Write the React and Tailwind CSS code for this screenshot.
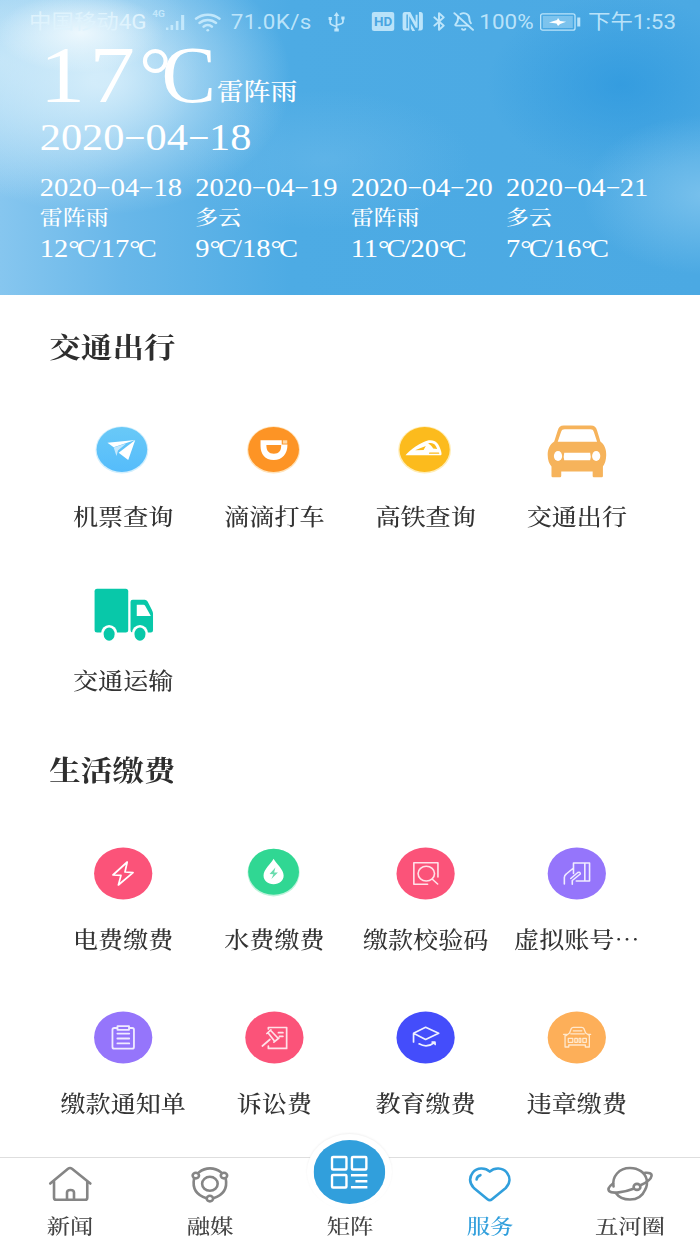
import React from 'react';
import { Wifi, Bluetooth, BellOff } from 'lucide-react';

const forecast = [
  { date: '2020-04-18', weather: '雷阵雨', low: '12', high: '17' },
  { date: '2020-04-19', weather: '多云', low: '9', high: '18' },
  { date: '2020-04-20', weather: '雷阵雨', low: '11', high: '20' },
  { date: '2020-04-21', weather: '多云', low: '7', high: '16' },
];

const Icon = ({ children }) => (
  <svg
    className="w-[52px] h-[52px] overflow-visible"
    viewBox="0 0 58 52"
    preserveAspectRatio="none"
    fill="none"
    stroke="none"
    strokeLinecap="round"
    strokeLinejoin="round"
  >
    {children}
  </svg>
);

const Disc = ({ color }) => <ellipse cx="29" cy="26.5" rx="29" ry="26" fill={color} />;

const PlaneIcon = () => (
  <Icon>
    <defs>
      <linearGradient id="plane" x1="0" y1="0" x2="0" y2="1">
        <stop offset="0" stopColor="#69c9f7" />
        <stop offset="1" stopColor="#55bcfb" />
      </linearGradient>
    </defs>
    <ellipse cx="27.7" cy="25.9" rx="26.3" ry="23.6" fill="#d3effd" />
    <ellipse cx="27.7" cy="25.5" rx="25.2" ry="22.4" fill="url(#plane)" />
    <path d="M13.3 18.7 41 16 19.5 23.2Z" fill="#fff" />
    <path d="M41 16 34 36 24.5 28.8Z" fill="#fff" />
    <path d="M19.5 23.5 32 19.5 23.8 26.5 22.3 32Z" fill="#c4e8fd" />
  </Icon>
);

const DidiIcon = () => (
  <Icon>
    <ellipse cx="28.2" cy="25.9" rx="26.3" ry="23.6" fill="#ffe3bb" />
    <ellipse cx="28.2" cy="25.5" rx="25.3" ry="22.4" fill="#fd9425" />
    <path d="M15.2 16.3H36.3V20.5H42C42 30 37 36 28.3 36S15.2 30 15.2 22ZM21 21C21 27 23.5 29.7 28.5 29.7S35.8 27 35.8 21Z" fill="#fff" fillRule="evenodd" />
    <path d="M37.4 16.3H41.8V19.6H37.4Z" fill="#ffd9a8" />
  </Icon>
);

const TrainIcon = () => (
  <Icon>
    <ellipse cx="28" cy="25.9" rx="26.3" ry="23.6" fill="#ffedb8" />
    <ellipse cx="28" cy="25.5" rx="25" ry="22.4" fill="#fcbb1d" />
    <path d="M9 31.3C13 26.5 24 18 32 16.3C39 15.5 42 19 44.5 27.5C45.2 30.5 45 31.3 43 31.3Z" fill="#fff" />
    <path d="M18.5 26.2 29.2 22 27 26ZM31.5 19.5C36 18 39 20 40.5 25L36.5 24.5C35.5 22.5 34 20.8 31.5 19.5Z" fill="#fcbb1d" />
    <path d="M33 29.2H42" stroke="#fcbb1d" strokeWidth="1.2" />
  </Icon>
);

const CarIcon = () => (
  <Icon>
    <path
      fillRule="evenodd"
      fill="#f6b35b"
      d="M16 1.6H43C46.5 1.6 48.3 3.5 49.2 6.5L52.5 17.5C56.5 20.5 58.4 25 58.3 31C58.2 36 57 40 55 42.5V52Q55 53.2 54 53.2H46Q44.8 53.2 44.8 52V47.5H13.5V52Q13.5 53.2 12.3 53.2H5Q3.8 53.2 3.8 52V42.5C1.5 40 0 36 0 31C0 25 2 20.5 6.5 17.5L10 6.5C11 3.5 12.5 1.6 16 1.6ZM17 5.3C15 5.3 14 6 13.3 8L10 17.8H49.2L46 8C45.4 6 44.4 5.3 42.5 5.3ZM16.5 28.7Q15.5 32.5 16.5 36.3H42.3Q43.4 32.5 42.3 28.7Z"
    />
    <ellipse cx="10.3" cy="32" rx="4.1" ry="5.1" fill="#fff" />
    <ellipse cx="48.3" cy="32" rx="4.1" ry="5.1" fill="#fff" />
  </Icon>
);

const TruckIcon = () => (
  <Icon>
    <g transform="translate(0.5 0.7)">
      <rect width="33.5" height="43.7" rx="2.5" fill="#08c8a9" />
      <path d="M38 11H50Q51.7 11 52.8 12.8L57 21Q58.2 23.3 58.2 25V41.5Q58.2 43.7 56 43.7H38Q35.8 43.7 35.8 41.5V13Q35.8 11 38 11ZM42 16V27.3H56L50.5 17.3Q49.8 16 48.6 16Z" fill="#08c8a9" fillRule="evenodd" />
      <ellipse cx="14.5" cy="45.2" rx="8.2" ry="9" fill="#fff" />
      <ellipse cx="45.2" cy="45.2" rx="8.2" ry="9" fill="#fff" />
      <ellipse cx="14.5" cy="45.4" rx="5.5" ry="6.6" fill="#08c8a9" />
      <ellipse cx="45.2" cy="45.4" rx="5.5" ry="6.6" fill="#08c8a9" />
    </g>
  </Icon>
);

const PowerIcon = () => (
  <Icon>
    <Disc color="#fb5379" />
    <path d="M33 15 18.8 28 26.8 28.4 24.2 38 38.8 25.6 30.8 25Z" stroke="#fff" strokeWidth="1.7" />
  </Icon>
);

const WaterIcon = () => (
  <Icon>
    <ellipse cx="28.2" cy="25.6" rx="26" ry="23.8" fill="#bff3dc" />
    <ellipse cx="28.2" cy="24.7" rx="25.3" ry="23" fill="#30d793" />
    <path d="M28.2 11.8C31 17 38.2 22.5 38.2 28.5C38.2 33.8 34 37.2 28.2 37.2S18.2 33.8 18.2 28.5C18.2 22.5 25.4 17 28.2 11.8Z" fill="#fff" />
    <path d="M30 20.5 24.2 27 28 27.2 26 32 32.5 25.6 28.7 25.4Z" fill="#69dcae" />
  </Icon>
);

const CheckCodeIcon = () => (
  <Icon>
    <Disc color="#fb5379" />
    <path d="M41.3 30V15.8H17.3V37.3H31M36 32.5 41 37" stroke="#ffe1e8" strokeWidth="1.6" />
    <ellipse cx="29.7" cy="26.6" rx="8.2" ry="7.4" stroke="#ffe1e8" strokeWidth="1.6" />
  </Icon>
);

const AccountIcon = () => (
  <Icon>
    <Disc color="#9575fb" />
    <path d="M16.6 37V30.5Q16.6 28.5 18.5 27L25.7 21V16H41.7V34H28.5M37 16V34M25.7 21V26.5M23 31.5 30 25.5Q32.5 24.5 32.5 27L24.5 33.5V37.3" stroke="#f0ebff" strokeWidth="1.6" />
  </Icon>
);

const NoticeIcon = () => (
  <Icon>
    <Disc color="#9575fb" />
    <path d="M23 17H20Q18.3 17 18.3 18.7V36Q18.3 37.7 20 37.7H38Q39.7 37.7 39.7 36V18.7Q39.7 17 38 17H35M23.3 15.2H34.8V18.8H23.3ZM23.2 22.6H35M23.2 27.5H35M23.2 32.4H35" stroke="#f0ebff" strokeWidth="1.8" />
  </Icon>
);

const LawsuitIcon = () => (
  <Icon>
    <Disc color="#fb5379" />
    <path d="M23 18V16.5H41.2V37.4H23V35M17 35 24.5 28.5M21.5 22.5 25.5 18.8M28.5 31.2 33.5 27M23 22.2 29 30M25.8 20 32.5 27M33 21.7H37.5M34 25.3H37.5" stroke="#ffe1e8" strokeWidth="1.7" />
  </Icon>
);

const EducationIcon = () => (
  <Icon>
    <Disc color="#444dfb" />
    <path d="M17 22.3 29 16.3 42 22.3 29 28.4ZM17 22.3V31M22.5 32.8Q30.5 37.3 38 31.5M35.5 31 38.3 31 38.5 33.5" stroke="#eef0ff" strokeWidth="1.7" />
  </Icon>
);

const ViolationIcon = () => (
  <Icon>
    <Disc color="#fdaf59" />
    <path d="M18.5 24.5 21.8 22 23.5 17.5Q24 16.3 25.5 16.3H34Q35.5 16.3 36 17.5L37.8 22 41.5 24.5V36H37.5V34H21V36H17.3V24.5M15.8 23.3H19M40 23.3H42.8M23 22.8H36.5M25.5 19.8H34" stroke="#ffe8cd" strokeWidth="1.3" />
    <path d="M20.5 27.3H25V31.3H20.5ZM27 27.3H29.5V31.3H27ZM31.2 27.3H33V31.3H31.2ZM35 27.3H38.5V31.3H35Z" stroke="#ffe8cd" strokeWidth="1.2" />
  </Icon>
);

const sections = [
  {
    title: '交通出行',
    items: [
      { label: '机票查询', icon: <PlaneIcon /> },
      { label: '滴滴打车', icon: <DidiIcon /> },
      { label: '高铁查询', icon: <TrainIcon /> },
      { label: '交通出行', icon: <CarIcon /> },
      { label: '交通运输', icon: <TruckIcon /> },
    ],
  },
  {
    title: '生活缴费',
    items: [
      { label: '电费缴费', icon: <PowerIcon /> },
      { label: '水费缴费', icon: <WaterIcon /> },
      { label: '缴款校验码', icon: <CheckCodeIcon /> },
      { label: '虚拟账号…', icon: <AccountIcon /> },
      { label: '缴款通知单', icon: <NoticeIcon /> },
      { label: '诉讼费', icon: <LawsuitIcon /> },
      { label: '教育缴费', icon: <EducationIcon /> },
      { label: '违章缴费', icon: <ViolationIcon /> },
    ],
  },
];

const TabIcon = ({ children }) => (
  <svg
    className="w-[41px] h-[36px] overflow-visible"
    viewBox="0 0 46 36"
    preserveAspectRatio="none"
    fill="none"
    stroke="currentColor"
    strokeWidth="2.6"
    strokeLinecap="round"
    strokeLinejoin="round"
  >
    {children}
  </svg>
);

const tabs = [
  {
    label: '新闻',
    icon: (
      <TabIcon>
        <path d="M3.2 17.5 21 2.8Q23 1.2 25 2.8L43.4 17.5M7 15.5V31.7Q7 33.8 9 33.8H38.3Q40.3 33.8 40.3 31.7V15.5" />
        <path d="M20 33.5V26.5Q20 24 23.5 24T27 26.5V33.5" />
      </TabIcon>
    ),
  },
  {
    label: '融媒',
    icon: (
      <TabIcon>
        <path d="M12 6.3Q17 2.4 23 2.4T34 6.3M38.8 12.8Q41.5 27.5 26.3 32.3M19.5 32.3Q4.2 27.5 7 12.8" />
        <ellipse cx="22.9" cy="17.8" rx="7.8" ry="7" />
        <ellipse cx="8.8" cy="9.6" rx="3.2" ry="2.8" />
        <ellipse cx="37" cy="9.6" rx="3.2" ry="2.8" />
        <ellipse cx="22.9" cy="32.6" rx="3.2" ry="2.8" />
      </TabIcon>
    ),
  },
  { label: '矩阵', center: true },
  {
    label: '服务',
    active: true,
    icon: (
      <TabIcon>
        <path d="M22.8 5.6C18 1.2 10 1.4 5.8 6.5C1.8 11.8 2.6 17.3 6.8 22L20.5 33.2Q22.8 35 25 33.2L38.8 22C43.4 17.3 43.6 11.5 39.8 6.5C35.6 1.4 27.5 1.2 22.8 5.6Z" />
        <path d="M9.6 13.5Q9.8 10.2 13.4 9.2" />
      </TabIcon>
    ),
  },
  {
    label: '五河圈',
    icon: (
      <TabIcon>
        <path d="M6.5 20.5C4.8 10.5 12 2 23 2C31.5 2 38 6.5 39.7 13.5C40.5 17.5 39.8 21 38 24C35.5 30 30 33.5 23 33.5C16.5 33.5 11.5 31 8.8 27" />
        <path d="M38 6.8C42 6.3 44.9 7.5 44.6 9.8C44.2 12.6 39.5 16.5 33.5 19.3M26.5 22.8C17 26.5 5 28 2 25C0.5 23 2.3 20.3 6 17.5" />
        <ellipse cx="30" cy="20.9" rx="3.4" ry="3" />
      </TabIcon>
    ),
  },
];

const StatusBar = () => (
  <div className="flex h-[43px] items-center pl-[26px] text-[20px] leading-none text-[#c9ebfd]/90 font-[Roboto,'Noto_Sans_CJK_SC',sans-serif] whitespace-nowrap">
    <span className="w-[110px] text-[#dff3fd]">中国移动4G</span>
    <span className="w-[12px] text-[9px] font-bold self-start pt-[10px]">4G</span>
    <svg className="w-[17px] h-[16px]" viewBox="0 0 18 16" preserveAspectRatio="none" fill="currentColor">
      <path d="M0 13.5H2.5V16H0ZM4.5 11H7V16H4.5ZM9.5 7H12V16H9.5ZM14.5 1H17.5V16H14.5Z" />
    </svg>
    <Wifi className="ml-[8px] w-[25px] h-[26px]" strokeWidth={2.4} />
    <span className="ml-[8px] w-[79px] tracking-[0.3px]">71.0K/s</span>
    <svg className="ml-[8px] w-[15px] h-[20px]" viewBox="0 0 15 20" preserveAspectRatio="none" fill="none" stroke="currentColor" strokeWidth="1.6">
      <path d="M7.5 3V18M1.8 7V11Q1.8 12.8 7.5 14.5M13.2 6.5V10Q13.2 12 7.5 13" />
      <path d="M7.5 0 10 4H5ZM0.3 5H3.3V8H0.3ZM11.7 4.5H14.7V7.5H11.7ZM5.5 16.5H9.5V19.5H5.5Z" fill="currentColor" stroke="none" />
    </svg>
    <span className="ml-[24px] flex w-[20px] h-[19px] items-center justify-center rounded-[2px] bg-[#b9e2f9] text-[12px] font-bold text-[#4aa5e1]">HD</span>
    <svg className="ml-[7px] w-[19px] h-[19px]" viewBox="0 0 22 20" preserveAspectRatio="none" fill="currentColor">
      <path d="M3 0H8.5L14 10.5V3H16V16.5L14 16.5 7.5 4.5V19.5H3Q0.5 19.5 0.5 17V3Q0.5 0 3 0ZM4.5 2.5V17H6V2.5Z" fillRule="evenodd" />
      <path d="M13.5 20 9 12V17L10.5 20ZM17.5 0H19Q21.5 0 21.5 3V17Q21.5 19.5 19 19.5H16.5L17.5 17Z" />
    </svg>
    <Bluetooth className="ml-[4px] w-[20px] h-[23px]" strokeWidth={2.2} />
    <BellOff className="ml-[2px] w-[20px] h-[21px]" strokeWidth={2.2} />
    <span className="ml-[4px] w-[54px]">100%</span>
    <svg className="w-[37px] h-[18px]" viewBox="0 0 41 18" preserveAspectRatio="none" fill="none" stroke="currentColor">
      <rect x="0.8" y="0.8" width="34" height="16.4" rx="2" strokeWidth="1.3" />
      <rect x="3" y="3" width="29.6" height="12" fill="currentColor" fillOpacity="0.45" stroke="none" />
      <path d="M9 9.5 17 7 18 5 20 8 26 8.7 20 11 18 13 16.5 10.5Z" fill="#fff" stroke="none" />
      <path d="M38.5 4.5V13.5" strokeWidth="3" />
    </svg>
    <span className="ml-[6px]">下午1:53</span>
  </div>
);

const DateText = ({ value }) => (
  <>
    {value.split('-').map((part, index) => (
      <React.Fragment key={index}>
        {index > 0 && <span className="relative -top-[0.07em] inline-block w-[0.5em] scale-x-160 scale-y-75 text-center">-</span>}
        {part}
      </React.Fragment>
    ))}
  </>
);

const Degree = () => <span className="tracking-[-0.1em]">°C</span>;

const WeatherHeader = () => (
  <header className="h-[295px] overflow-hidden text-white bg-[radial-gradient(ellipse_75px_40px_at_72px_33px,rgba(248,253,255,0.8),rgba(248,253,255,0)_100%),radial-gradient(ellipse_170px_135px_at_90px_80px,rgba(222,242,252,0.85)_5%,rgba(222,242,252,0)_100%),radial-gradient(ellipse_110px_80px_at_630px_195px,rgba(150,208,242,0.6),rgba(150,208,242,0)_100%),radial-gradient(ellipse_120px_90px_at_555px_85px,rgba(45,152,222,0.75),rgba(45,152,222,0)_100%),radial-gradient(ellipse_130px_70px_at_290px_160px,rgba(120,192,236,0.4),rgba(120,192,236,0)_100%),radial-gradient(ellipse_180px_140px_at_0px_60px,rgba(190,227,247,0.8),rgba(190,227,247,0)_100%),linear-gradient(90deg,#86c6ef_0px,#68b7e9_110px,#4dabe4_260px,#4ba9e3_100%)]">
    <StatusBar />
    <div className="pl-[35.5px] font-['Liberation_Serif','Noto_Serif_CJK_SC','Noto_Sans_CJK_SC',serif]">
      <div className="flex h-[70px] items-baseline whitespace-nowrap leading-[64px]">
        <span className="w-[88px] text-[81px] tracking-[4px]">17</span>
        <span className="w-[70px] origin-left scale-x-[0.9] text-[81px] tracking-[-10px]">°C</span>
        <span className="relative -top-[2px] text-[24px] font-medium">雷阵雨</span>
      </div>
      <div className="h-[50px] text-[37.8px] leading-[48px]">
        <DateText value="2020-04-18" />
      </div>
      <div className="mt-[8.5px] flex text-[25.4px] leading-[30.5px]">
        {forecast.map((day) => (
          <div key={day.date} className="w-[138.8px] whitespace-nowrap">
            <div>
              <DateText value={day.date} />
            </div>
            <div className="relative top-[1px] text-[20.5px] font-medium">{day.weather}</div>
            <div>
              {day.low}
              <Degree />/{day.high}
              <Degree />
            </div>
          </div>
        ))}
      </div>
    </div>
  </header>
);

const Section = ({ title, items }) => (
  <section className="mb-[-9px] px-[42.5px]">
    <h2 className="pl-[1.5px] h-[104px] pt-[28.5px] text-[28.2px] leading-[44px] font-bold text-[#2e2e2e]">{title}</h2>
    <div className="grid grid-cols-4">
      {items.map((item) => (
        <div key={item.label} className="flex h-[164px] flex-col items-center pt-[25px]">
          {item.icon}
          <span className="mt-[22px] whitespace-nowrap text-[22.4px] leading-[34px] font-medium text-[#333]">{item.label}</span>
        </div>
      ))}
    </div>
  </section>
);

const TabBar = () => (
  <nav className="relative flex h-[87px] border-t border-[#dedede] bg-white">
    {tabs.map((tab) => (
      <div key={tab.label} className={tab.active ? 'flex w-1/5 flex-col items-center text-[#319fdc]' : 'flex w-1/5 flex-col items-center text-[#858585]'}>
        <div className="flex h-[52px] items-end">
          {tab.center ? (
            <div className="absolute left-[312px] top-[-24px] -translate-x-1/2 rounded-full bg-white p-[6px] shadow-[0_-1px_2px_rgba(0,0,0,0.06)]">
              <svg className="h-[64px] w-[64px]" viewBox="0 0 72 64" preserveAspectRatio="none" fill="none" stroke="#fff" strokeWidth="2.4">
                <ellipse cx="36" cy="32" rx="36" ry="32" fill="#319fdc" stroke="none" />
                <rect x="18.5" y="17" width="14.5" height="12.5" rx="1" />
                <rect x="38.5" y="17" width="14.5" height="12.5" rx="1" />
                <rect x="18.5" y="35" width="14.5" height="12.5" rx="1" />
                <path d="M37.5 35.2H54M42 41.2H54M37.5 47.2H54" />
              </svg>
            </div>
          ) : (
            <div className="mb-[8px]">{tab.icon}</div>
          )}
        </div>
        <span className={tab.active ? 'text-[20.8px] leading-[30px] font-medium whitespace-nowrap' : 'text-[20.8px] leading-[30px] font-medium whitespace-nowrap text-[#444]'}>{tab.label}</span>
      </div>
    ))}
  </nav>
);

const App = () => {
  return (
    <div className="h-[1244px] w-[700px] overflow-hidden bg-white">
      <div
        lang="zh-CN"
        className="flex h-full w-[625px] origin-top-left scale-x-[1.12] flex-col font-['Noto_Serif_CJK_SC','Noto_Sans_CJK_SC',serif]"
      >
        <WeatherHeader />
        <main className="h-[862px] shrink-0 overflow-hidden">
          {sections.map((section) => (
            <Section key={section.title} title={section.title} items={section.items} />
          ))}
        </main>
        <TabBar />
      </div>
    </div>
  );
};

export default App;
